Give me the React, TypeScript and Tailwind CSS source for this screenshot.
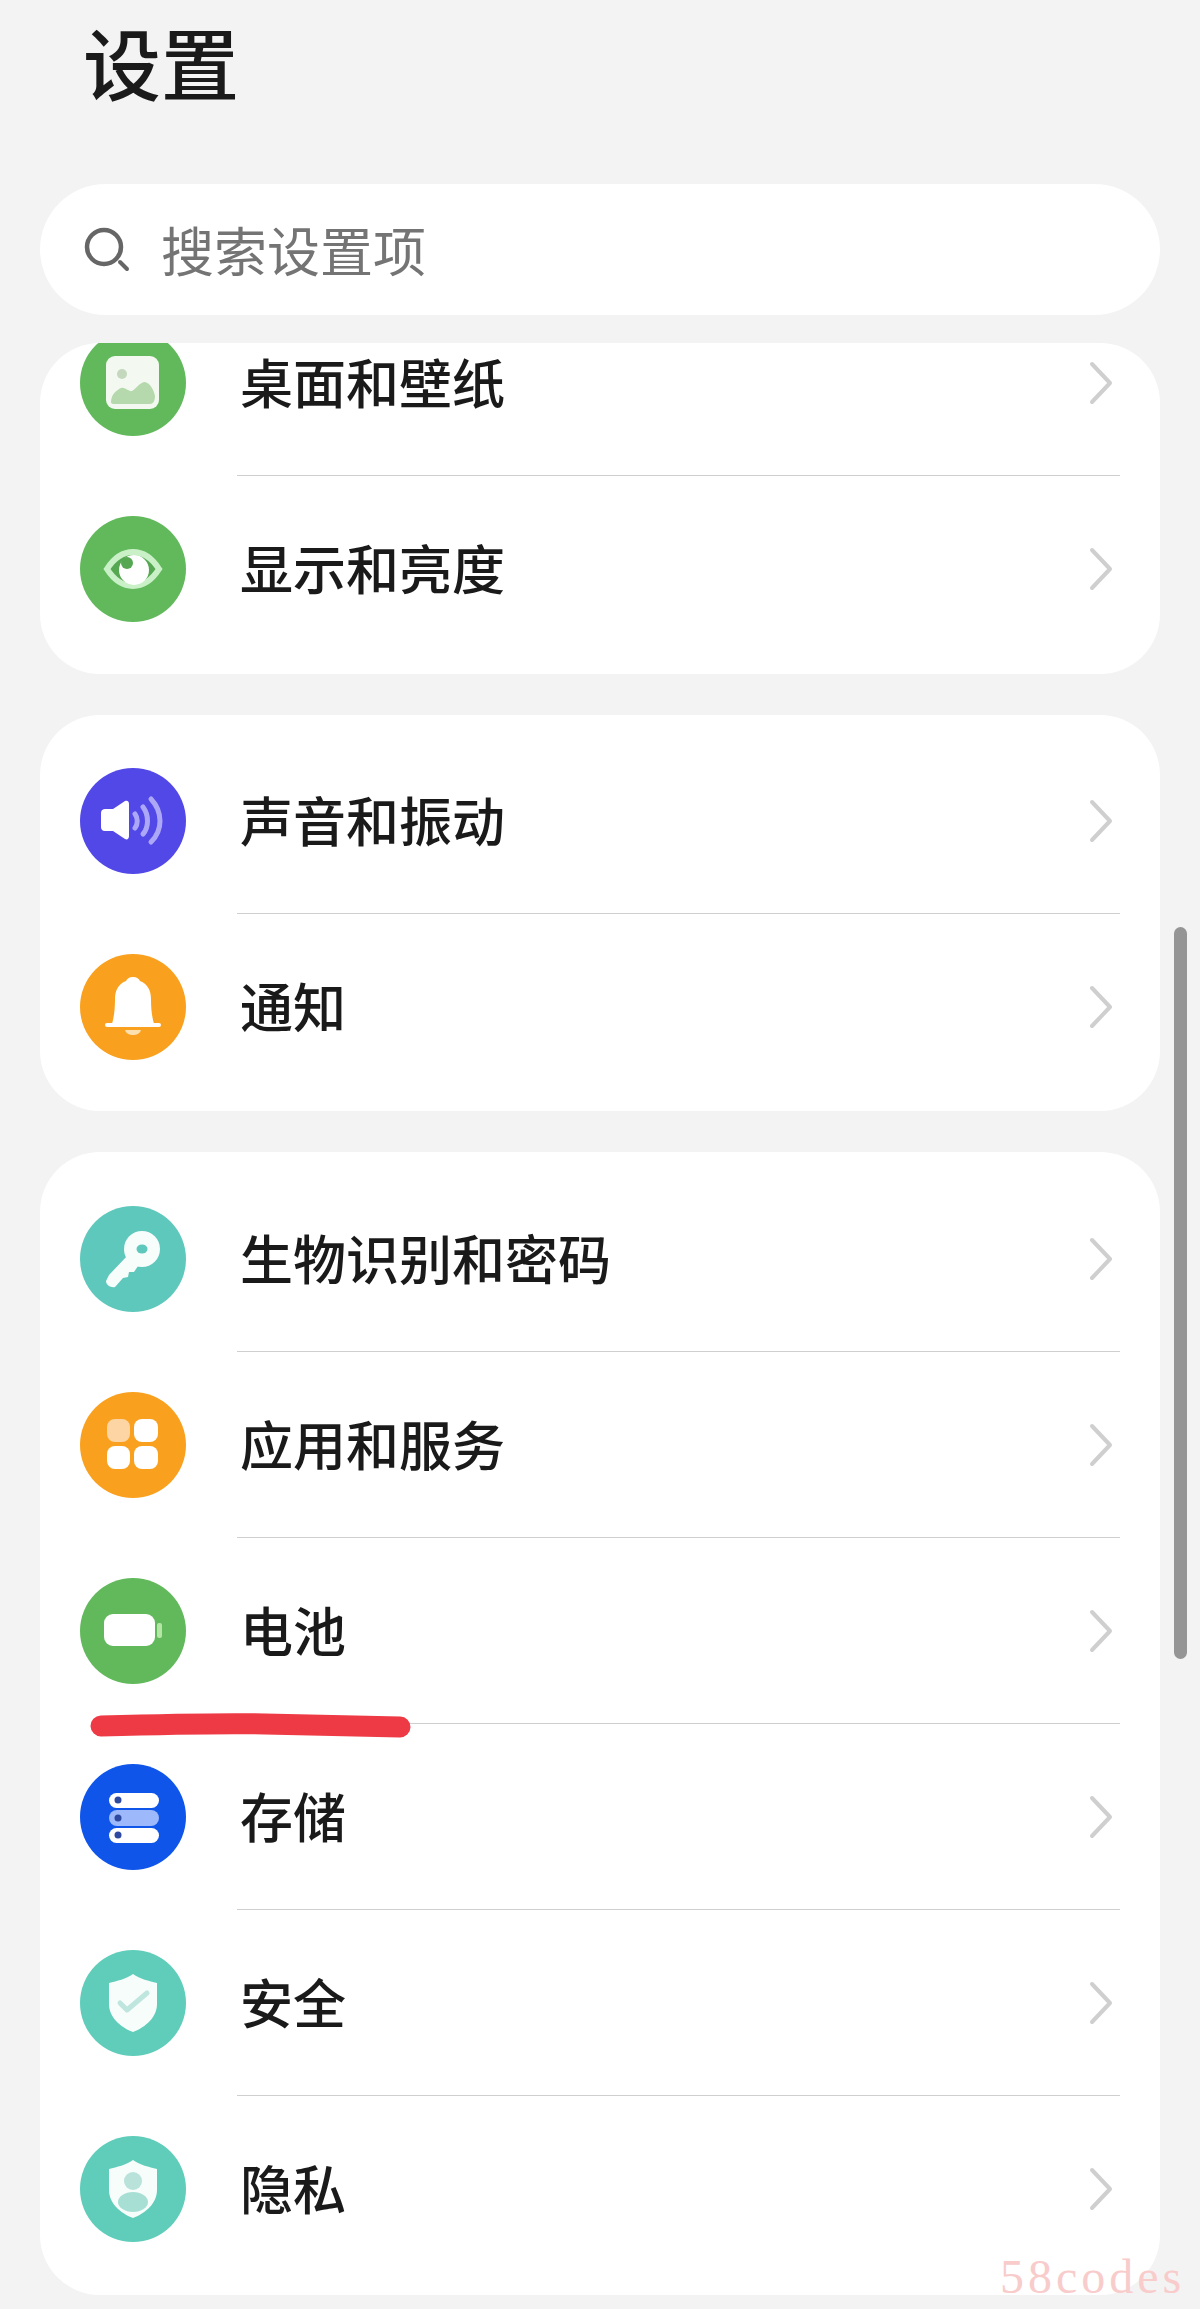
import React from 'react';

const Circle: React.FC<{ color: string; children: React.ReactNode }> = ({ color, children }) => (
  <svg width="106" height="106" viewBox="0 0 106 106" className="shrink-0">
    <circle cx="53" cy="53" r="53" fill={color} />
    {children}
  </svg>
);

const SHIELD = 'M53 24 C60 29 69 31 77 33 V54 C77 67 66 77 53 82 C40 77 29 67 29 54 V33 C37 31 46 29 53 24 Z';

const icons: Record<string, React.ReactNode> = {
  wallpaper: (
    <Circle color="#62b95c">
      <rect x="26" y="26" width="53" height="53" rx="9" fill="#f3f9f1" />
      <circle cx="42" cy="44" r="5" fill="#c3d8bc" />
      <path d="M31 72 C31 64 37 60 41 58 C45 57 49 62 52 61 C56 59 60 52 65 52 C70 53 74 60 75 66 C75 71 73 74 70 74 H35 C33 74 31 74 31 72 Z" fill="#b5d8ac" />
    </Circle>
  ),
  display: (
    <Circle color="#62b95c">
      <path d="M27 53 C34 42 43 36 53 36 C63 36 72 42 79 53 C72 64 63 70 53 70 C43 70 34 64 27 53 Z" fill="#55a851" stroke="#c9f0c6" strokeWidth="6" />
      <circle cx="54" cy="54" r="15" fill="#ffffff" />
      <circle cx="47" cy="47" r="6" fill="#55a851" />
    </Circle>
  ),
  sound: (
    <Circle color="#5248e8">
      <path d="M25 41 H33 L45 33 C48 32 49 34 49 36 V68 C49 71 47 72 45 71 L33 63 H25 C22 63 21 61 21 59 V45 C21 42 23 41 25 41 Z" fill="#ffffff" />
      <path d="M55 46 C58 50 58 56 55 60" stroke="#aca7f7" strokeWidth="5" fill="none" strokeLinecap="round" />
      <path d="M63 39 C69 47 69 59 63 66" stroke="#aca7f7" strokeWidth="5" fill="none" strokeLinecap="round" />
      <path d="M71 31 C83 44 83 62 71 74" stroke="#aca7f7" strokeWidth="5" fill="none" strokeLinecap="round" />
    </Circle>
  ),
  notify: (
    <Circle color="#f9a11f">
      <path d="M53 23 C57 23 59 25 60 27 C68 30 71 37 71 45 C71 55 72 63 74 70 H32 C34 63 35 55 35 45 C35 37 38 30 46 27 C47 25 49 23 53 23 Z" fill="#ffffff" />
      <rect x="25" y="69" width="56" height="4" rx="2" fill="#ffffff" />
      <path d="M45 76 H61 C60 80 56 81 53 81 C50 81 46 80 45 76 Z" fill="#fde0b0" />
    </Circle>
  ),
  key: (
    <Circle color="#5fc8bc">
      <circle cx="62" cy="43" r="18" fill="#f6fdfb" />
      <path d="M48 49 L58 60 L54 66 L49 66 L48 71 L43 72 L35 81 C31 82 26 79 26 75 L29 69 Z" fill="#f6fdfb" />
      <ellipse cx="62" cy="43" rx="5.5" ry="4.5" fill="#5fc8bc" />
    </Circle>
  ),
  apps: (
    <Circle color="#f9a11f">
      <rect x="27" y="27" width="23" height="23" rx="8" fill="#fdd5a5" />
      <rect x="54" y="27" width="24" height="23" rx="8" fill="#ffffff" />
      <rect x="27" y="54" width="23" height="23" rx="8" fill="#ffffff" />
      <rect x="54" y="54" width="24" height="23" rx="8" fill="#ffffff" />
    </Circle>
  ),
  battery: (
    <Circle color="#62b95c">
      <rect x="24" y="36" width="51" height="32" rx="9" fill="#ffffff" />
      <rect x="77" y="45" width="5" height="15" rx="2" fill="#b5e6a5" />
    </Circle>
  ),
  storage: (
    <Circle color="#0f55ea">
      <rect x="29" y="29" width="50" height="15" rx="7.5" fill="#ffffff" />
      <rect x="29" y="46" width="50" height="16" rx="8" fill="#9db8fb" />
      <rect x="29" y="64" width="50" height="15" rx="7.5" fill="#ffffff" />
      <circle cx="38" cy="36" r="3.5" fill="#2d4aa0" />
      <circle cx="38" cy="54" r="3.5" fill="#2d4aa0" />
      <circle cx="38" cy="71" r="3.5" fill="#2d4aa0" />
    </Circle>
  ),
  security: (
    <Circle color="#5fcdba">
      <path d={SHIELD} fill="#f6fdfb" />
      <path d="M40 53 L47 60 L67 43" stroke="#bfe6de" strokeWidth="5" fill="none" strokeLinecap="round" strokeLinejoin="round" />
    </Circle>
  ),
  privacy: (
    <Circle color="#5fcdba">
      <path d={SHIELD} fill="#f6fdfb" />
      <circle cx="53" cy="45" r="9" fill="#b8e2da" />
      <ellipse cx="53" cy="66" rx="15" ry="10" fill="#a8dfd4" />
    </Circle>
  ),
};

const Chevron = () => (
  <svg width="24" height="44" viewBox="0 0 24 44" className="shrink-0">
    <path d="M3 3 L21 22 L3 41" stroke="#cfcfcf" strokeWidth="4" fill="none" strokeLinecap="round" strokeLinejoin="round" />
  </svg>
);

const Row: React.FC<{ icon: string; label: string; last?: boolean }> = ({ icon, label, last }) => (
  <div className="flex items-center h-[186px] pl-[40px] pr-[40px]">
    {icons[icon]}
    <div className={`ml-[51px] flex-1 h-full flex items-center justify-between pl-[3px] pr-[7px] ${last ? '' : 'border-b border-[#cfcfcf]'}`}>
      <span className="text-[53px] leading-none text-[#1a1a1a] font-medium pb-[3px]">{label}</span>
      <Chevron />
    </div>
  </div>
);

const cards = [
  { cls: 'h-[331px]', inner: '-mt-[53px]', rows: [['wallpaper', '桌面和壁纸'], ['display', '显示和亮度']] },
  { cls: 'h-[396px] pt-[13px]', inner: '', rows: [['sound', '声音和振动'], ['notify', '通知']] },
  { cls: 'h-[1143px] pt-[14px]', inner: '', rows: [['key', '生物识别和密码'], ['apps', '应用和服务'], ['battery', '电池'], ['storage', '存储'], ['security', '安全'], ['privacy', '隐私']] },
];

export default function App() {
  return (
    <div className="relative w-[1200px] h-[2309px] overflow-hidden bg-[#f3f3f4] px-[40px] font-['Noto_Sans_CJK_SC',sans-serif]">
      {/* Header */}
      <h1 className="h-[184px] pt-[15px] pl-[43px] text-[78px] leading-[92px] font-medium text-[#1a1a1a]">设置</h1>

      {/* Search */}
      <div className="flex items-center h-[131px] rounded-full bg-white pl-[44px] mb-[28px]">
        <svg width="46" height="46" viewBox="0 0 46 46" className="shrink-0">
          <circle cx="20" cy="20" r="17" stroke="#666666" strokeWidth="4.5" fill="none" />
          <path d="M36 35 L43 42" stroke="#666666" strokeWidth="4" strokeLinecap="round" />
        </svg>
        <span className="ml-[31px] text-[53px] leading-none text-[#747474]">搜索设置项</span>
      </div>

      {/* Cards */}
      <div className="flex flex-col gap-[41px]">
        {cards.map((card) => (
          <div key={card.rows[0][1]} className={`bg-white rounded-[60px] overflow-hidden ${card.cls}`}>
            <div className={card.inner}>
              {card.rows.map(([icon, label], i) => (
                <Row key={label} icon={icon} label={label} last={i === card.rows.length - 1} />
              ))}
            </div>
          </div>
        ))}
      </div>

      {/* Scroll bar */}
      <div className="absolute left-[1174px] top-[927px] w-[13px] h-[732px] rounded-full bg-[#959595]" />

      {/* Hand-drawn red underline */}
      <svg className="absolute left-[85px] top-[1705px]" width="335" height="40" viewBox="0 0 335 40">
        <path d="M16 21 C90 19 130 18 180 19 C230 20 280 21 315 22" stroke="#ee3a45" strokeWidth="21" fill="none" strokeLinecap="round" />
      </svg>

      {/* Watermark */}
      <div className="absolute left-[1000px] top-[2247px] text-[48px] leading-[60px] tracking-[4px] text-[#f9cccc] font-['Liberation_Serif',serif]">58codes</div>
    </div>
  );
}
